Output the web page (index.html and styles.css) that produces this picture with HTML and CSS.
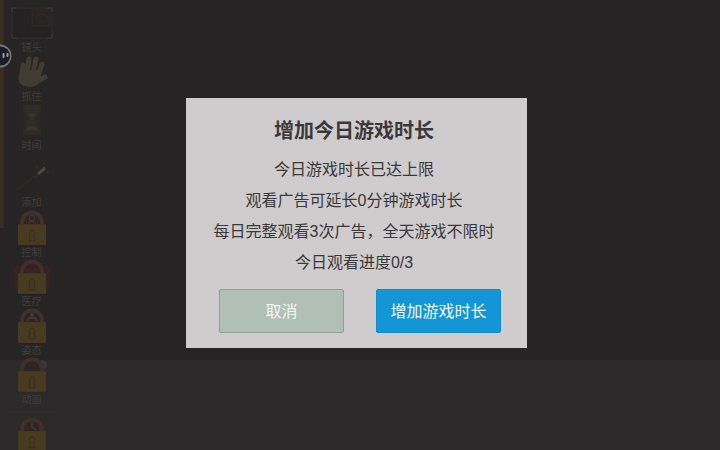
FILE: index.html
```
<!DOCTYPE html>
<html lang="zh-CN">
<head>
<meta charset="utf-8">
<meta name="viewport" content="width=device-width, initial-scale=1">
<title>增加今日游戏时长</title>
<link rel="stylesheet" href="styles.css">
</head>
<body>
<svg class="defs" aria-hidden="true">
  <symbol id="lock" viewBox="0 0 42 36">
    <path d="M11 17V14C11-1 31-1 31 14V17" fill="#2c2525"/>
    <path d="M11 16V14C11 0 31 0 31 14V16" fill="none" stroke="#432f27" stroke-width="4"/>
    <rect x="7" y="15" width="28" height="21" rx="1" fill="#463b1e"/>
    <path d="M7 15.500h28M7 35.500h28" stroke="#483222"/>
    <path d="M21 21c-3 0-3 3-2 5l-1 6h6l-1-6c1-2 1-5-2-5z" fill="#453920" stroke="#382b20"/>
  </symbol>
</svg>
<main class="scene">
  <div class="sky"></div>
  <div class="ground"></div>
</main>
<nav class="toolbar">
  <div class="group">
    <button class="tool"><svg class="icon" viewBox="0 0 42 36"><rect x="1" y="4" width="40" height="30" fill="#242223"/><path d="M1 4h40v30H1z" fill="none" stroke="#302d2c"/><path d="M1 8V4h5M36 4h5v4M1 30v4h5M36 34h5v-4" fill="none" stroke="#3c3837"/><rect x="21" y="6" width="18" height="16" fill="#282424" stroke="#2e2a29"/><ellipse cx="31" cy="14" rx="6" ry="4" fill="none" stroke="#2e2a29"/></svg><span>镜头</span></button>
    <button class="tool"><svg class="icon" viewBox="0 0 42 36"><g fill="none" stroke="#423c30" stroke-width="5" stroke-linecap="round"><path d="M11 23L12 12M16 20L18 6M22 20L25 6M27 23L31 11M25 29L34 24"/></g><path d="M9 18L27 17L31 25C28 34 20 35 14 33C8 32 6 27 9 18z" fill="#423c30"/></svg><span>抓住</span></button>
    <button class="tool"><svg class="icon" viewBox="0 0 42 36"><rect x="12" y="3" width="18" height="30" fill="#2b2724"/><path d="M12 3h18v4H12zM12 29h18v4H12z" fill="#352923"/><path d="M14 7h14c0 6-4 7-4 11s4 5 4 11H14c0-6 4-7 4-11s-4-5-4-11z" fill="#2a2d2a" stroke="#302e29"/><path d="M17 12h8l-4 5zM15 28c2-5 10-5 12 0z" fill="#3f3125"/></svg><span>时间</span></button>
    <button class="tool tall"><svg class="icon" viewBox="0 0 42 36"><path d="M6 31L26 15" stroke="#302725" stroke-width="2"/><path d="M27 15L34 9" stroke="#4d4743" stroke-width="3"/><path d="M24 7l3 2M32 4l2 1M36 12l2 2M24 18l2-2" stroke="#3b2a24" stroke-width="2"/></svg><span>添加</span></button>
  </div>
  <div class="group locked">
    <button class="tool"><svg class="icon" viewBox="0 0 42 36"><use href="#lock"/><circle cx="21" cy="9" r="3" fill="none" stroke="#3d3a3a"/><path d="M17 14l3-2 5 2" fill="none" stroke="#3d3a3a"/></svg><span>控制</span></button>
    <button class="tool"><svg class="icon" viewBox="0 0 42 36"><rect x="3" y="8" width="36" height="24" rx="3" fill="#382122"/><use href="#lock"/><path d="M15 14c0-8 12-8 12 0z" fill="#3a2022"/></svg><span>医疗</span></button>
    <button class="tool"><svg class="icon" viewBox="0 0 42 36"><use href="#lock"/><circle cx="21" cy="8" r="2" fill="#3d3a3b"/><path d="M16 14l2-3h6l2 3" fill="none" stroke="#3d3a3b" stroke-width="2"/></svg><span>姿态</span></button>
    <button class="tool"><svg class="icon" viewBox="0 0 42 36"><circle cx="31" cy="9" r="5" fill="#39383a"/><use href="#lock"/></svg><span>动画</span></button>
  </div>
  <div class="group more">
    <button class="tool" aria-label="更多"><svg class="icon" viewBox="0 0 42 36"><use href="#lock"/><path d="M21 6v5l4 3" fill="none" stroke="#3b3636" stroke-width="2"/></svg></button>
  </div>
</nav>
<svg class="floating" viewBox="0 0 24 24" aria-hidden="true"><circle cx="12" cy="12" r="11.500" fill="#777676"/><circle cx="12.500" cy="12" r="9.500" fill="#181d29"/><path d="M15.500 10v3M19.500 10v2" stroke="#9b9d9f" stroke-width="2" stroke-linecap="round"/></svg>
<div class="overlay">
  <section class="dialog" role="dialog" aria-modal="true" aria-labelledby="title">
    <div class="message">
      <h1 id="title">增加今日游戏时长</h1>
      <p>今日游戏时长已达上限</p>
      <p>观看广告可延长0分钟游戏时长</p>
      <p>每日完整观看3次广告，全天游戏不限时</p>
      <p>今日观看进度0/3</p>
    </div>
    <div class="actions">
      <button class="action cancel">取消</button>
      <button class="action confirm">增加游戏时长</button>
    </div>
  </section>
</div>
</body>
</html>
```
FILE: styles.css
```
* {
  box-sizing: border-box;
}

body {
  margin: 0;
  height: 100vh;
  overflow: hidden;
  background: #272425;
  font-family: "Liberation Sans", "Noto Sans CJK SC", sans-serif;
}

button {
  margin: 0;
  padding: 0;
  border: 0;
  background: none;
  font: inherit;
}

.defs {
  position: absolute;
  width: 0;
  height: 0;
}

.scene {
  display: flex;
  flex-direction: column;
  height: 100%;
}

.sky {
  flex: 4;
}

.ground {
  flex: 1;
  background: #2b292a;
}

.toolbar {
  position: absolute;
  top: 0;
  left: 0;
  width: 60px;
  padding: 4px 0 0 3px;
}

.toolbar::before {
  content: "";
  position: absolute;
  top: 0;
  left: 0;
  width: 3px;
  height: 228px;
  background: #3a2e1f;
  border-right: 1px solid #302920;
}

.group {
  display: flex;
  flex-direction: column;
}

.locked {
  margin-top: 1px;
}

.more {
  margin-top: 6px;
  padding-top: 4px;
  border-top: 1px solid #2e2c2d;
}

.tool {
  display: flex;
  flex-direction: column;
  align-items: center;
  height: 49px;
  color: #403d3e;
  font-size: 10px;
  line-height: 11px;
}

.tall {
  height: 57px;
  padding-top: 8px;
}

.icon {
  flex: none;
  width: 42px;
  height: 36px;
  margin-bottom: 2px;
}

.floating {
  position: absolute;
  top: 44px;
  left: -12px;
  width: 24px;
  height: 24px;
}

.overlay {
  position: fixed;
  inset: 0;
  display: flex;
  align-items: center;
  justify-content: center;
  padding: 0 7px 4px 0;
}

.dialog {
  width: 341px;
  max-width: 100%;
  padding: 17px 26px 15px 33px;
  background: #cecccd;
  color: #3a3839;
}

.message {
  margin: 0 -4px 11px -16px;
  text-align: center;
}

h1 {
  margin: 0 0 7px;
  font-size: 20px;
  line-height: 32px;
  font-weight: 700;
}

p {
  margin: 0;
  font-size: 16px;
  line-height: 31px;
  white-space: nowrap;
}

.actions {
  display: flex;
  gap: 32px;
}

.action {
  flex: 1;
  height: 44px;
  padding-bottom: 2px;
  border: 1px solid #91a096;
  border-radius: 2px;
  background: #b1c0b5;
  color: #f4f6f5;
  font-size: 16px;
}

.confirm {
  border-color: #168dca;
  background: #1296d6;
}
```
